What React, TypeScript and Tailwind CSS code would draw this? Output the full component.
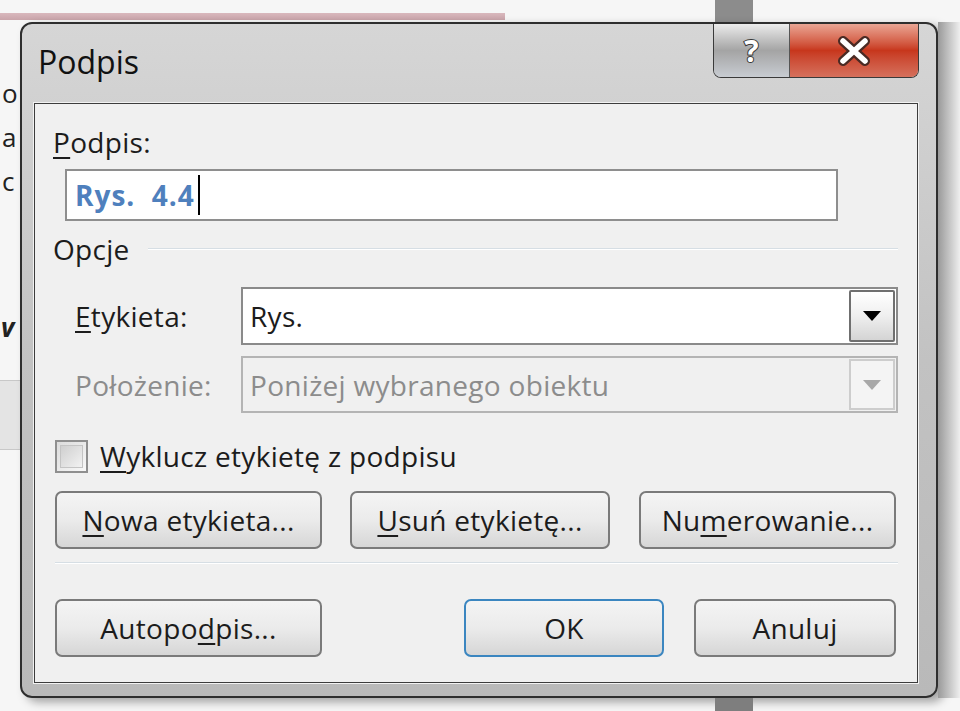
import React from 'react';

const font = { fontFamily: '"Open Sans", "Noto Sans", sans-serif' };

const Btn: React.FC<{ w: string; focused?: boolean; children: React.ReactNode }> = ({ w, focused, children }) => (
  <div
    className={`${w} h-[58px] rounded-[7px] border-2 ${
      focused ? 'border-[#3b86c0]' : 'border-[#7a7a7a]'
    } flex items-center justify-center bg-gradient-to-b from-[#f4f4f4] via-[#ebebeb] to-[#d6d6d6] text-[28px] tracking-[0.3px] text-[#1c1c1c]`}
  >
    <span>{children}</span>
  </div>
);

const Arrow: React.FC<{ disabled?: boolean }> = ({ disabled }) => (
  <svg width="20" height="12" viewBox="0 0 20 12">
    <path d="M1 1 L19 1 L10 11 Z" fill={disabled ? '#a8a8a8' : '#000'} />
  </svg>
);

export default function App() {
  return (
    <div className="w-[960px] h-[711px] bg-[#f6f6f6] overflow-hidden flex flex-col" style={font}>
      {/* pasek nad oknem */}
      <div className="h-[22px] flex shrink-0">
        <div className="w-[505px] h-[7px] mt-[13px] bg-gradient-to-b from-[#d9b8bd] to-[#c9a4aa]" />
        <div className="ml-[210px] w-[38px] h-full bg-[#8c8c8c]" />
      </div>

      <div className="flex">
        {/* strzęp dokumentu po lewej */}
        <div className="w-[20px] h-[676px] overflow-hidden text-[26px] text-[#222] leading-none flex flex-col">
          <span className="mt-[58px] ml-[2px]">o</span>
          <span className="mt-[18px] ml-[2px]">a</span>
          <span className="mt-[18px] ml-[2px]">c</span>
          <span className="mt-[120px] ml-[1px] font-bold italic">v</span>
          <div className="mt-[40px] h-[70px] bg-[#e4e4e4] border-y border-[#c8c8c8]" />
        </div>

        {/* okno dialogowe */}
        <div className="w-[918px] h-[676px] rounded-[12px] border-2 border-[#2e2e2e] bg-gradient-to-b from-[#d6d6d6] via-[#c2c2c2] to-[#b9b9b9] shadow-[6px_4px_10px_rgba(0,0,0,0.35)] flex flex-col">
          {/* pasek tytułu */}
          <div className="h-[79px] flex items-start shrink-0">
            <div className="ml-[16px] mt-[18px] text-[32px] leading-[40px] text-[#111]">Podpis</div>
            <div className="ml-auto mr-[17px] flex h-[54px] rounded-b-[8px] border border-t-0 border-[#3a3a3a] overflow-hidden">
              <div className="w-[76px] h-full bg-gradient-to-b from-[#ececec] via-[#a4a4a4] to-[#c8ccd2] flex items-center justify-center border-r border-[#555]">
                <span className="text-[30px] font-bold text-white leading-none [-webkit-text-stroke:2px_#3a3a3a] [paint-order:stroke]">?</span>
              </div>
              <div className="w-[128px] h-full bg-gradient-to-b from-[#e9a594] via-[#c7361c] to-[#d5705c] flex items-center justify-center">
                <svg width="34" height="30" viewBox="0 0 34 30">
                  <path d="M6 5 L28 25 M28 5 L6 25" stroke="#4a2a24" strokeWidth="10" strokeLinecap="round" />
                  <path d="M6 5 L28 25 M28 5 L6 25" stroke="#fff" strokeWidth="5.5" strokeLinecap="round" />
                </svg>
              </div>
            </div>
          </div>

          {/* obszar klienta */}
          <div className="ml-[12px] w-[884px] h-[580px] bg-[#f0f0f0] border border-[#3c3c3c] shadow-[0_0_0_1px_#f2f2f2] flex flex-col text-[28px] tracking-[0.3px] text-[#1c1c1c]">
            <div className="mt-[21px] ml-[18px] h-[34px] leading-[34px]">
              <u className="underline-offset-4">P</u>odpis:
            </div>

            <div className="mt-[10px] ml-[30px] w-[773px] h-[52px] bg-white border-2 border-[#8e8e8e] flex items-center pl-[8px]">
              <span className="text-[#4f80bd] font-bold tracking-[1px] whitespace-pre">Rys.  4.4</span>
              <span className="ml-[3px] w-[2px] h-[40px] bg-black" />
            </div>

            <div className="mt-[11px] ml-[18px] h-[34px] leading-[34px] flex items-center">
              <span>Opcje</span>
              <div className="ml-[18px] mr-[19px] flex-1 h-[2px] border-t border-[#d6dee4] bg-white" />
            </div>

            <div className="mt-[21px] ml-[40px] flex items-center">
              <div className="w-[166px]">
                <u className="underline-offset-4">E</u>tykieta:
              </div>
              <div className="w-[657px] h-[58px] bg-white border-2 border-[#8a8a8a] flex items-center">
                <span className="pl-[7px] flex-1">Rys.</span>
                <div className="w-[46px] h-[52px] mr-[1px] border-2 border-[#6f6f6f] rounded-[2px] bg-gradient-to-b from-[#ffffff] via-[#efefef] to-[#d4d4d4] flex items-center justify-center">
                  <Arrow />
                </div>
              </div>
            </div>

            <div className="mt-[11px] ml-[40px] flex items-center text-[#8c8c8c]">
              <div className="w-[166px]">Położenie:</div>
              <div className="w-[657px] h-[57px] bg-[#f0f0f0] border-2 border-[#b4b4b4] flex items-center">
                <span className="pl-[7px] flex-1">Poniżej wybranego obiektu</span>
                <div className="w-[46px] h-[51px] mr-[1px] border-2 border-[#cdcdcd] bg-[#f4f4f4] flex items-center justify-center">
                  <Arrow disabled />
                </div>
              </div>
            </div>

            <div className="mt-[27px] ml-[20px] h-[33px] leading-[33px] flex items-center">
              <div className="w-[33px] h-[33px] border-2 border-[#8f8f8f] bg-gradient-to-br from-[#dcdcdc] to-[#f8f8f8] p-[3px]">
                <div className="w-full h-full border border-[#c4c4c4] bg-gradient-to-br from-[#cfcfcf] to-[#f2f2f2]" />
              </div>
              <span className="ml-[12px]">
                <u className="underline-offset-4">W</u>yklucz etykietę z podpisu
              </span>
            </div>

            <div className="mt-[18px] ml-[20px] flex">
              <Btn w="w-[267px]">
                <u className="underline-offset-4">N</u>owa etykieta...
              </Btn>
              <div className="ml-[28px]">
                <Btn w="w-[260px]">
                  <u className="underline-offset-4">U</u>suń etykietę...
                </Btn>
              </div>
              <div className="ml-[29px]">
                <Btn w="w-[257px]">
                  Nu<u className="underline-offset-4">m</u>erowanie...
                </Btn>
              </div>
            </div>

            <div className="mt-[13px] ml-[20px] w-[843px] h-[2px] border-t border-[#d6dee4] bg-white" />

            <div className="mt-[35px] ml-[20px] flex">
              <Btn w="w-[267px]">
                Autopo<u className="underline-offset-4">d</u>pis...
              </Btn>
              <div className="ml-[142px]">
                <Btn w="w-[200px]" focused>
                  OK
                </Btn>
              </div>
              <div className="ml-[30px]">
                <Btn w="w-[202px]">Anuluj</Btn>
              </div>
            </div>
          </div>
        </div>

        <div className="w-[22px] h-[676px] bg-gradient-to-r from-[#9a9a9a] to-[#efefef]" />
      </div>

      <div className="flex">
        <div className="ml-[715px] w-[38px] h-[20px] bg-[#7e7e7e]" />
      </div>
    </div>
  );
}
